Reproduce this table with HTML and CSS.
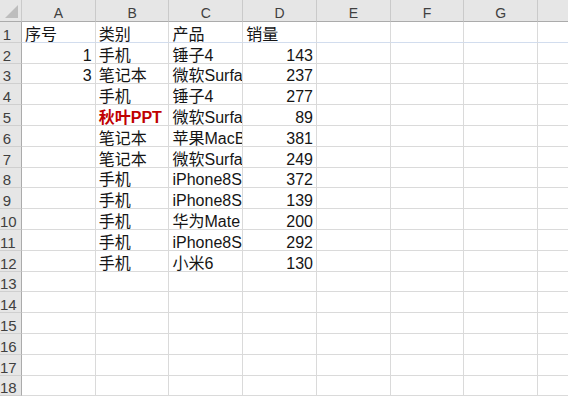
FILE: index.html
```html
<!DOCTYPE html>
<html lang="zh-CN">
<head>
    <meta charset="UTF-8">
    <title>销量表</title>
    <link rel="stylesheet" href="styles.css">
</head>
<body>
    <table class="sheet">
        <colgroup>
            <col class="col-head">
            <col class="col-cell"><col class="col-cell"><col class="col-cell"><col class="col-cell">
            <col class="col-cell"><col class="col-cell"><col class="col-cell"><col class="col-cell">
        </colgroup>
        <thead>
            <tr class="head-row">
                <th class="corner"><span class="corner-mark"></span></th>
                <th>A</th><th>B</th><th>C</th><th>D</th><th>E</th><th>F</th><th>G</th><th></th>
            </tr>
        </thead>
        <tbody>
            <tr class="first"><th class="row-num">1</th><td>序号</td><td>类别</td><td>产品</td><td>销量</td><td></td><td></td><td></td><td></td></tr>
            <tr><th class="row-num">2</th><td class="num">1</td><td>手机</td><td>锤子4</td><td class="num">143</td><td></td><td></td><td></td><td></td></tr>
            <tr><th class="row-num">3</th><td class="num">3</td><td>笔记本</td><td>微软Surfa</td><td class="num">237</td><td></td><td></td><td></td><td></td></tr>
            <tr><th class="row-num">4</th><td></td><td>手机</td><td>锤子4</td><td class="num">277</td><td></td><td></td><td></td><td></td></tr>
            <tr><th class="row-num">5</th><td></td><td class="mark">秋叶PPT</td><td>微软Surfa</td><td class="num">89</td><td></td><td></td><td></td><td></td></tr>
            <tr><th class="row-num">6</th><td></td><td>笔记本</td><td>苹果MacB</td><td class="num">381</td><td></td><td></td><td></td><td></td></tr>
            <tr><th class="row-num">7</th><td></td><td>笔记本</td><td>微软Surfa</td><td class="num">249</td><td></td><td></td><td></td><td></td></tr>
            <tr><th class="row-num">8</th><td></td><td>手机</td><td>iPhone8S</td><td class="num">372</td><td></td><td></td><td></td><td></td></tr>
            <tr><th class="row-num">9</th><td></td><td>手机</td><td>iPhone8S</td><td class="num">139</td><td></td><td></td><td></td><td></td></tr>
            <tr><th class="row-num">10</th><td></td><td>手机</td><td>华为Mate</td><td class="num">200</td><td></td><td></td><td></td><td></td></tr>
            <tr><th class="row-num">11</th><td></td><td>手机</td><td>iPhone8S</td><td class="num">292</td><td></td><td></td><td></td><td></td></tr>
            <tr><th class="row-num">12</th><td></td><td>手机</td><td>小米6</td><td class="num">130</td><td></td><td></td><td></td><td></td></tr>
            <tr><th class="row-num">13</th><td></td><td></td><td></td><td></td><td></td><td></td><td></td><td></td></tr>
            <tr><th class="row-num">14</th><td></td><td></td><td></td><td></td><td></td><td></td><td></td><td></td></tr>
            <tr><th class="row-num">15</th><td></td><td></td><td></td><td></td><td></td><td></td><td></td><td></td></tr>
            <tr><th class="row-num">16</th><td></td><td></td><td></td><td></td><td></td><td></td><td></td><td></td></tr>
            <tr><th class="row-num">17</th><td></td><td></td><td></td><td></td><td></td><td></td><td></td><td></td></tr>
            <tr><th class="row-num">18</th><td></td><td></td><td></td><td></td><td></td><td></td><td></td><td></td></tr>
        </tbody>
    </table>
</body>
</html>
```

FILE: styles.css
```css
body {
    margin: 0;
    overflow: hidden;
    background: #ffffff;
    font-family: "Liberation Sans", "Noto Sans CJK SC", sans-serif;
}

.sheet {
    table-layout: fixed;
    border-collapse: separate;
    border-spacing: 0;
    width: 612px;
}
.col-head {
    width: 22px;
}
.col-cell {
    width: 73.7px;
}

/* column letters */
.head-row {
    height: 22px;
}
.head-row th {
    background: #e6e6e6;
    color: #404040;
    font-weight: normal;
    font-size: 14px;
    line-height: 16px;
    vertical-align: bottom;
    padding: 0;
    border-right: 1px solid #cacaca;
    border-bottom: 1px solid #ababab;
    white-space: nowrap;
    overflow: hidden;
}
.corner {
    position: relative;
}
.corner-mark {
    position: absolute;
    right: 3px;
    bottom: 3px;
    width: 0;
    height: 0;
    border-left: 13px solid transparent;
    border-bottom: 13px solid #bdbdbd;
}

/* grid body */
tbody tr {
    height: 20.8px;
}
.row-num {
    background: #e6e6e6;
    color: #404040;
    font-weight: normal;
    font-size: 15px;
    line-height: 14px;
    vertical-align: bottom;
    text-align: center;
    padding: 0 7px 0 0;
    border-right: 1px solid #ababab;
    border-bottom: 1px solid #cfcfcf;
    white-space: nowrap;
}
td {
    padding: 0 3px;
    font-size: 16px;
    line-height: 14px;
    color: #151515;
    vertical-align: bottom;
    white-space: nowrap;
    overflow: hidden;
    border-right: 1px solid #dadada;
    border-bottom: 1px solid #dadada;
}
.first td {
    border-bottom-color: #d2ddee;
}
.num {
    text-align: right;
}
.mark {
    color: #c00000;
    font-weight: bold;
}
```
